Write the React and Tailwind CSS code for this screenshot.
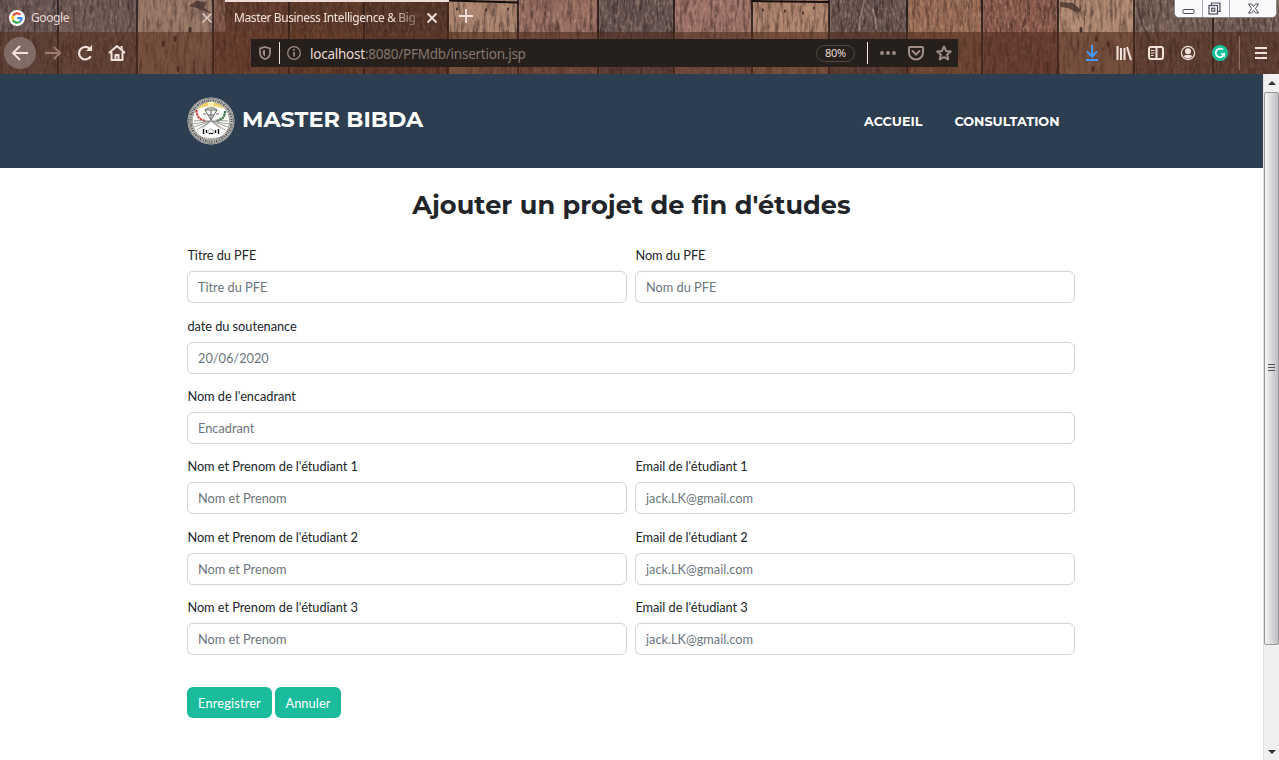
import React from "react";

const PLANKS = [
  [0, 58, "#6f5c58"], [58, 137, "#776159"], [137, 213, "#ad8670"], [213, 289, "#875745"],
  [289, 364, "#7d523d"], [364, 448, "#6b493c"], [448, 518, "#a9826d"], [518, 598, "#966b60"],
  [598, 674, "#63524f"], [674, 752, "#9c7067"], [752, 829, "#ad826c"], [829, 907, "#66534f"],
  [907, 982, "#996b54"], [982, 1058, "#88584b"], [1058, 1134, "#ae866f"], [1134, 1213, "#715c53"],
  [1213, 1279, "#6d5852"],
];

const KNOTS = [
  [190, 30], [175, 39], [163, 44], [178, 69], [1081, 30], [1096, 39], [1108, 44], [1093, 69],
  [457, 9], [486, 10], [508, 9], [763, 10], [785, 11], [803, 13], [814, 8],
];

function Wood() {
  return (
    <svg className="absolute inset-0 h-full w-full" viewBox="0 0 1279 74" preserveAspectRatio="none" aria-hidden="true">
      <defs>
        <filter id="grain" x="0" y="0" width="100%" height="100%" colorInterpolationFilters="sRGB">
          <feTurbulence type="fractalNoise" baseFrequency="0.3 0.05" numOctaves="4" seed="7" />
          <feColorMatrix values="0 0 0 0 0.12  0 0 0 0 0.07  0 0 0 0 0.07  2.2 0 0 0 -0.95" />
        </filter>
        <filter id="light" x="0" y="0" width="100%" height="100%" colorInterpolationFilters="sRGB">
          <feTurbulence type="fractalNoise" baseFrequency="0.4 0.16" numOctaves="4" seed="21" />
          <feColorMatrix values="0 0 0 0 0.83  0 0 0 0 0.7  0 0 0 0 0.6  2.4 0 0 0 -1.1" />
        </filter>
      </defs>
      {PLANKS.map(([a, b, c]) => <rect key={a} x={a} width={b - a} height="74" fill={c} />)}
      <rect width="1279" height="74" filter="url(#grain)" opacity="0.6" />
      <rect width="1279" height="74" filter="url(#light)" opacity="0.45" />
      {PLANKS.slice(1).map(([a]) => (
        <g key={a}>
          <rect x={a - 1} width="2" height="74" fill="#1f1517" opacity="0.8" />
          <rect x={a + 1} width="1" height="74" fill="#c9a58d" opacity="0.2" />
        </g>
      ))}
      {KNOTS.map(([x, y], i) => <ellipse key={x} cx={x} cy={y} rx={i < 8 ? 1.5 : 1} ry={i < 8 ? 3 : 1.8} fill="#2c1c1a" opacity="0.8" />)}
      <path d="M449 0.500l69 2M752 1l77 1" stroke="#130e0e" strokeWidth="2" />
      <path d="M189 6l7-5 11 1-3 6 9 6-9-3-7-3zM1060 2l13 1 8 7-3 3-10-5-8-1z" fill="#3a2926" opacity="0.7" />
      <path d="M131 0c4 16-2 34-16 47M1139 8c0 10 4 22 14 36M863 0c-2 12-5 18-5 30M875 0c2 14-4 18 1 32" fill="none" stroke="#32292b" strokeWidth="1.5" opacity="0.6" />
      <path d="M864 0c-1 10-6 18-5 31M873 9c2 8 3 14 3 21" fill="none" stroke="#c7ab99" strokeWidth="2" opacity="0.45" />
    </svg>
  );
}

function Ico({ className = "", children, w = 20, sw = 2 }) {
  return (
    <svg className={"shrink-0 " + className} width={w} height={w} viewBox={`0 0 ${w} ${w}`} fill="none" stroke="currentColor" strokeWidth={sw}>
      {children}
    </svg>
  );
}

function Browser() {
  return (
    <header className="relative h-[74px] overflow-hidden font-['Noto_Sans',sans-serif] text-[#f2e2dc]">
      <Wood />
      <div className="relative flex h-8">
        <div className="flex w-[225px] items-center bg-[#4a3b3f]/20 pt-[3px] pl-[9px] pr-[12px]">
          <svg width="16" height="16" viewBox="0 0 16 16">
            <circle cx="8" cy="8" r="8" fill="#fff" />
            <g fill="none" strokeWidth="2.200">
              <path d="M11.300 4.700A4.600 4.600 0 0 0 4 5.700" stroke="#ea4335" />
              <path d="M4 5.700a4.600 4.600 0 0 0 0 4.600" stroke="#fbbc05" />
              <path d="M4 10.300a4.600 4.600 0 0 0 7.100 1.200" stroke="#34a853" />
              <path d="M11.100 11.500A4.600 4.600 0 0 0 12.600 8.100H8.200" stroke="#4285f4" />
            </g>
          </svg>
          <span className="ml-[6px] text-[12px] tracking-[-0.4px] text-[#e6d8d3]">Google</span>
          <Ico w={12} sw={1.3} className="ml-auto text-[#e4d4cf]"><path d="M1.500 1.500l9 9M10.500 1.500l-9 9" /></Ico>
        </div>
        <div className="flex w-[224px] items-center border-t-2 border-[#eeddd7] bg-[#43241a]/55 pt-px pl-[9px] pr-[11px]">
          <div className="whitespace-nowrap text-[12px] tracking-[-0.39px] [mask-image:linear-gradient(to_right,black_155px,rgba(0,0,0,0.25)_184px)]">Master Business Intelligence &amp; Big</div>
          <Ico w={12} sw={1.8} className="ml-auto"><path d="M1.500 1.500l9 9M10.500 1.500l-9 9" /></Ico>
        </div>
        <div className="flex items-center pl-[9px]">
          <Ico w={16} sw={1.8}><path d="M8 1v14M1 8h14" /></Ico>
        </div>
        <div className="ml-auto mr-[2px] flex h-[18px] w-[103px] items-center rounded-b-[5px] border border-t-0 border-[#8c8584] bg-[#fafafc] text-[#4b4a5c]">
          <div className="flex h-full w-[28px] items-center justify-center border-r border-[#a5a3a8]"><Ico w={13} sw={1}><rect x="1" y="7.500" width="11" height="4" rx="1" /></Ico></div>
          <div className="flex h-full w-[27px] items-center justify-center border-r border-[#a5a3a8] pr-[3px]"><Ico w={13} sw={1.2}><path d="M3.500 3.500v-2.500h8.500v8.500h-2.500" /><rect x="1" y="3.500" width="8.500" height="8.500" /><rect x="3.700" y="6.200" width="3" height="3" /></Ico></div>
          <div className="flex flex-1 justify-center"><Ico w={13} sw={1}><path d="M1.500 2h3l2 2.500 2-2.500h3l-3 4.500 3 4.500h-3l-2-2.500-2 2.500h-3l3-4.500z" /></Ico></div>
        </div>
      </div>
      <div className="relative flex h-[42px] items-center bg-[#4f2a1d]/60">
        <div className="ml-[4px] flex h-8 w-8 items-center justify-center rounded-full bg-[#968681]/65"><Ico w={18} sw={2}><path d="M17 9H2M9 2L2 9l7 7" /></Ico></div>
        <Ico w={18} className="ml-[8px] text-[#9c7d70]"><path d="M1 9h15M10 3l6 6-6 6" /></Ico>
        <Ico w={18} sw={2.2} className="ml-[14px]"><path d="M14.700 12.200A6.200 6.200 0 1 1 13.600 4.700" /><path d="M16 1v6h-6z" fill="currentColor" stroke="none" /></Ico>
        <Ico w={18} className="ml-[14px]"><path d="M1 9l8-7 8 7M3.500 8v8h11V8" strokeLinejoin="round" /><path d="M7.500 16v-5h3v5" /><path d="M13.500 2v4" /></Ico>
        <div className="ml-[125px] flex h-7 w-[707px] items-center bg-[#25201b] text-[#a28e84]">
          <Ico w={14} sw={1.7} className="ml-[7px]"><path d="M7 1l5 1.500V7c0 3-2 5-5 6.200C4 12 2 10 2 7V2.500z" /><path d="M7 4v6.500C5.300 9.500 4.700 8.300 4.700 6.800V4.500z" fill="currentColor" stroke="none" /></Ico>
          <div className="ml-[7px] h-[22px] w-px bg-[#eee1dc]" />
          <Ico w={14} sw={1.2} className="ml-[7px]"><circle cx="7" cy="7" r="6.300" /><path d="M7 6v4.500M7 3v1.700" strokeWidth="1.600" /></Ico>
          <span className="ml-[9px] mt-[2px] whitespace-nowrap text-[13.5px] tracking-[-0.24px] text-[#85766d]"><span className="text-[#eadad3]">localhost</span>:8080/PFMdb/insertion.jsp</span>
          <span className="ml-auto flex h-[17px] w-[39px] items-center justify-center rounded-full border border-[#514a45] pt-px text-[11px] tracking-[-0.3px] text-[#eadad3]">80%</span>
          <div className="ml-[12px] h-[22px] w-px bg-[#f4e9e4]" />
          <Ico w={16} className="ml-[12px]"><g fill="currentColor" stroke="none"><circle cx="2" cy="8" r="1.900" /><circle cx="8" cy="8" r="1.900" /><circle cx="14" cy="8" r="1.900" /></g></Ico>
          <Ico w={16} className="ml-[12px]"><path d="M2 2h12q1 0 1 1v4.500a7 7 0 0 1-14 0V3q0-1 1-1z" /><path d="M4.500 6L8 9.500 11.500 6" strokeLinecap="round" /></Ico>
          <Ico w={16} sw={2} className="ml-[12px] mr-[6px]"><path d="M8 1.500l2 4.400 4.800.500-3.600 3.200 1 4.900L8 12l-4.200 2.500 1-4.900L1.200 6.400 6 5.900z" strokeLinejoin="round" /></Ico>
        </div>
        <Ico w={16} sw={2} className="ml-[126px] text-[#459cff]"><path d="M8 0v11M3 6.500l5 5 5-5M2 15h12" /></Ico>
        <Ico w={16} sw={2} className="ml-[16px]"><path d="M1.500 1v14M5 3v12M8.500 3v12M11 2l4 13" /></Ico>
        <Ico w={16} sw={2} className="ml-[16px]"><rect x="1" y="2" width="14" height="12" rx="2" /><path d="M8.500 2v12" /><path d="M3 5.500h3.500M3 8h3.500M3 10.500h2.500" strokeWidth="1" /></Ico>
        <Ico w={16} sw={1.2} className="ml-[16px]"><circle cx="8" cy="8" r="6.600" /><circle cx="8" cy="6.300" r="3" fill="currentColor" stroke="none" /><path d="M3.500 11c1.500-.8 2-1 2.500-1h4c.5 0 1 .2 2.500 1-1 1.600-2.600 2.400-4.500 2.400S4.500 12.600 3.500 11z" fill="currentColor" stroke="none" /></Ico>
        <Ico w={16} sw={1.7} className="ml-[16px]"><circle cx="8" cy="8" r="8" fill="#15c39a" stroke="none" /><path d="M11 4.700A4.300 4.300 0 1 0 12.200 9H9" stroke="#fff" /><path d="M12.200 8v4" stroke="#fff" strokeWidth="1.200" /></Ico>
        <div className="ml-[11px] h-[34px] w-px bg-[#8d6e60]" />
        <Ico w={12} sw={2} className="ml-[15px]"><path d="M0 1h12M0 6h12M0 11h12" /></Ico>
      </div>
    </header>
  );
}

function Emblem() {
  return (
    <svg width="48" height="48" viewBox="0 0 48 48" className="shrink-0">
      <circle cx="24" cy="24" r="23.500" fill="#cfcfcc" />
      <circle cx="24" cy="24" r="22.600" fill="none" stroke="#6e6e6c" strokeWidth=".8" />
      <circle cx="24" cy="24" r="20.600" fill="none" stroke="#555" strokeWidth="2.400" strokeDasharray="1.100 .8 .6 .7 1.500 .9" />
      <circle cx="24" cy="24" r="18.700" fill="#fcfcfa" stroke="#8a8780" strokeWidth=".7" />
      <path d="M10 12Q24 -2 38 12Q24 6 10 12z" fill="#f0d062" />
      <path d="M21 5h6v5h-6z" fill="#fff3b0" />
      <path d="M9.500 13c0 6 3 10 9 11" fill="none" stroke="#d43c31" strokeWidth="2" strokeDasharray="2.500 .7" />
      <path d="M38 14c0 6-3 9-9 10" fill="none" stroke="#3b7549" strokeWidth="2.200" strokeDasharray="2.500 .5" />
      <path d="M18 13l3-2h6l3 2-3 5-3 5-3-5zM18 13h12M21 18h6M24 13v9M16 17h3M29 17h3" fill="none" stroke="#555" strokeWidth=".9" />
      <path d="M7 24c7-1 11 0 17 0s10-1 17 0M6 27l18-3 18 3M7 30l17-6 17 6M10 33l14-9 14 9M14 32l10-8 10 8" fill="none" stroke="#8c8c8c" strokeWidth=".8" />
      <path d="M13 32q11-7 22 0v6H13z" fill="#fff" />
      <path d="M16.500 32v5M19.500 33v3M28.500 33v3M31.500 32v5" stroke="#111" strokeWidth="1.400" />
      <path d="M21 37q0-5 3-5t3 5" fill="#fff" stroke="#777" strokeWidth=".7" />
      <path d="M22 36.500h4" stroke="#111" strokeWidth="1.200" />
      <path d="M11 39q13 5 26 0" fill="none" stroke="#555" strokeDasharray="1 1" />
    </svg>
  );
}

function Field({ label, text }) {
  return (
    <div className="mb-[12.8px] flex-1">
      <label className="mb-[6.4px] block h-[19.2px] pt-[0.75px] pl-[0.4px] leading-[19.2px] tracking-[-0.05px]">{label}</label>
      <div className="flex h-8 items-center rounded-[6px] border border-[#ced4da] px-[10px] pt-[1.5px] tracking-[-0.02px] text-[#6c757d]">{text}</div>
    </div>
  );
}

function Scrollbar() {
  return (
    <div className="flex w-4 shrink-0 flex-col items-center border-l border-[#e3e3e3] bg-[#f0f0f0]">
      <svg width="15" height="18" viewBox="0 0 15 18"><path d="M4 11l4-4 4 4z" fill="#333" /></svg>
      <div className="flex h-[553px] w-[15px] items-center justify-center rounded-[2px] border border-[#979797] bg-linear-to-r from-[#f5f5f5] via-[#dadadd] to-[#bfbfc5]">
        <svg width="8" height="9" viewBox="0 0 8 9"><path d="M0 .500h7M0 3.500h7M0 6.500h7" stroke="#555" /></svg>
      </div>
      <svg className="mt-auto" width="15" height="18" viewBox="0 0 15 18"><path d="M4 8h8l-4 4z" fill="#333" /></svg>
    </div>
  );
}

export default function App() {
  return (
    <div className="flex h-[760px] w-[1279px] flex-col overflow-hidden bg-white">
      <Browser />
      <div className="flex flex-1">
        <div className="flex-1 font-[Lato,sans-serif] text-[12.8px] text-[#212529]">
          <nav className="flex h-[94px] items-center bg-[#2c3e50] pl-[187px] pr-[203.5px] font-[Montserrat,Inter,sans-serif] font-bold text-white">
            <Emblem />
            <span className="ml-[7px] mb-[3px] whitespace-nowrap text-[22.4px]">MASTER BIBDA</span>
            <div className="ml-auto mt-[2px] flex gap-[32px] text-[12.8px]">
              <span>ACCUEIL</span>
              <span>CONSULTATION</span>
            </div>
          </nav>
          <main className="px-[187px]">
            <h1 className="mt-[21px] h-[32px] whitespace-nowrap text-center font-[Montserrat,Inter,sans-serif] text-[25.6px] leading-[32px] font-bold tracking-[0.07px]">Ajouter un projet de fin d'études</h1>
            <form className="mt-[24.600px] w-[888px]">
              <div className="flex gap-2"><Field label="Titre du PFE" text="Titre du PFE" /><Field label="Nom du PFE" text="Nom du PFE" /></div>
              <div className="flex"><Field label="date du soutenance" text="20/06/2020" /></div>
              <div className="flex"><Field label="Nom de l'encadrant" text="Encadrant" /></div>
              {[1, 2, 3].map((n) => (
                <div key={n} className="flex gap-2">
                  <Field label={`Nom et Prenom de l'étudiant ${n}`} text="Nom et Prenom" />
                  <Field label={`Email de l'étudiant ${n}`} text="jack.LK@gmail.com" />
                </div>
              ))}
              <div className="mt-[19px] flex gap-[3px] text-white">
                <button type="button" className="h-[31px] w-[85px] rounded-[6px] bg-[#1abc9c] pt-[2px] tracking-[0.15px]">Enregistrer</button>
                <button type="button" className="h-[31px] w-[66px] rounded-[6px] bg-[#1abc9c] pt-[2px] tracking-[0.1px]">Annuler</button>
              </div>
            </form>
          </main>
        </div>
        <Scrollbar />
      </div>
    </div>
  );
}
